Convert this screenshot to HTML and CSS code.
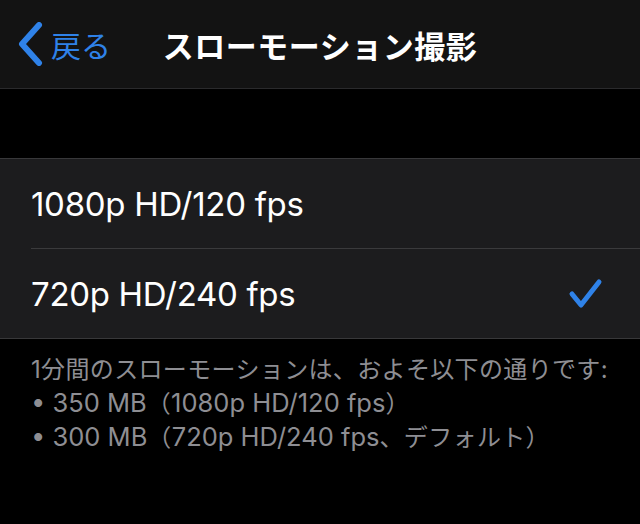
FILE: index.html
```html
<!DOCTYPE html>
<html lang="ja">
<head>
<meta charset="utf-8">
<link rel="stylesheet" href="styles.css">
</head>
<body>
<div class="screen">
  <header class="nav">
    <div class="nav-left">
      <svg class="chevron" width="26" height="44" viewBox="0 0 26 44"><path d="M22 3 L5 22 L22 41" fill="none" stroke="#2f82e8" stroke-width="6" stroke-linecap="round" stroke-linejoin="round"/></svg>
      <span class="back-label">戻る</span>
    </div>
    <h1 class="title">スローモーション撮影</h1>
    <div class="nav-right"></div>
  </header>
  <div class="spacer"></div>
  <ul class="group">
    <li class="row"><span class="row-label">1080p HD/120 fps</span></li>
    <li class="row"><span class="row-label">720p HD/240 fps</span>
      <svg class="check" width="36" height="34" viewBox="0 0 36 34"><path d="M4 17 L13 28 L31 5" fill="none" stroke="#2f82e8" stroke-width="5" stroke-linecap="round" stroke-linejoin="round"/></svg>
    </li>
  </ul>
  <div class="footer">
    <p>1分間のスローモーションは、およそ以下の通りです:</p>
    <p><span class="lat">• 350 MB</span>（<span class="lat">1080p HD/120 fps</span>）</p>
    <p><span class="lat">• 300 MB</span>（<span class="lat">720p HD/240 fps</span>、デフォルト）</p>
  </div>
</div>
</body>
</html>
```
FILE: styles.css
```css
html, body {
  margin: 0;
  padding: 0;
  background: #000;
}
.screen {
  width: 640px;
  height: 524px;
  overflow: hidden;
  background: #000;
  font-family: Inter, "Noto Sans CJK JP", sans-serif;
}
.nav {
  height: 88px;
  background: #131313;
  border-bottom: 1px solid #2a2a2c;
  display: grid;
  grid-template-columns: 1fr auto 1fr;
  align-items: center;
}
.nav-left {
  display: flex;
  align-items: center;
  padding-left: 17px;
  gap: 8px;
}
.chevron {
  display: block;
}
.back-label {
  color: #2f82e8;
  font-family: "Noto Sans CJK JP", sans-serif;
  font-size: 30px;
  line-height: 1;
}
.title {
  margin: 0;
  color: #fff;
  font-family: "Noto Sans CJK JP", sans-serif;
  font-weight: 700;
  font-size: 31px;
  line-height: 1;
  letter-spacing: 0.5px;
}
.spacer {
  height: 69px;
}
.group {
  list-style: none;
  margin: 0;
  padding: 0 0 0 31px;
  background: #1c1c1e;
  border-top: 1px solid #38383a;
  border-bottom: 1px solid #38383a;
}
.row {
  height: 89px;
  display: flex;
  align-items: center;
  justify-content: space-between;
  padding-right: 36px;
}
.row + .row {
  border-top: 1px solid #3a3a3c;
}
.row-label {
  color: #fff;
  font-size: 33px;
  letter-spacing: -0.3px;
}
.check {
  display: block;
}
.footer {
  padding: 14px 0 0 31px;
  color: #8e8e93;
  font-size: 24px;
  letter-spacing: 0.35px;
}
.footer p {
  margin: 0;
  line-height: 33px;
}
.lat {
  font-size: 25.5px;
  letter-spacing: 0;
}
```
